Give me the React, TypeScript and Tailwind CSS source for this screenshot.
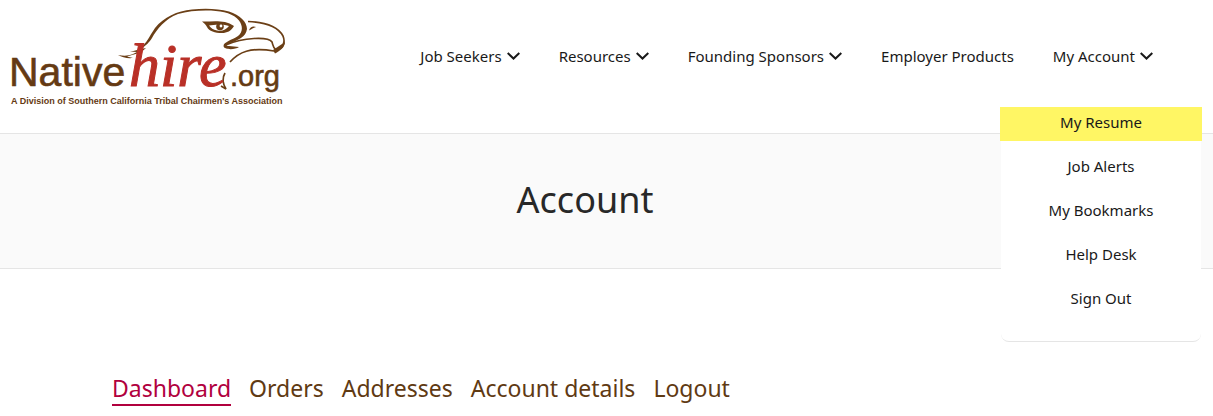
import React from 'react';

const navItems = [
    { label: 'Job Seekers', hasMenu: true },
    { label: 'Resources', hasMenu: true },
    { label: 'Founding Sponsors', hasMenu: true },
    { label: 'Employer Products', hasMenu: false },
];

const accountMenu = ['Job Alerts', 'My Bookmarks', 'Help Desk', 'Sign Out'];

const tabs = ['Orders', 'Addresses', 'Account details', 'Logout'];

const Chevron: React.FC = () => (
    <svg className="w-[13px] h-2" viewBox="0 0 13 8" fill="none" stroke="currentColor" strokeWidth="2" aria-hidden="true">
        <path d="M0.7 1 L6.5 6.5 L12.3 1" />
    </svg>
);

const Logo: React.FC = () => (
    <svg className="block w-[280px] h-[100px]" viewBox="8 8 280 100" role="img" aria-label="NativeHire.org">
        {/* Eagle head */}
        <g fill="#6b3f16">
            <path d="M118 55 C124 56 128 56 133 54 L137 52 L130 51.5 C135 51 138 50 141 48 C147 42 149 37 155 28 C164 17 177 11 192 9.5 C205 8.2 218 8.6 229 11.5 C240 15 247 22 247 29 C246 37 238 40 229 43.5 C226 45 226 46 229 46 L239 47 C235 50 224 50 223.5 46 C223.5 42 232 40 238 36 C243 32 243 26 239 20.5 C234 14 224 11.5 211 10.6 C200 10.2 188 11 178 14 C165 19 157 29 152 38 C149 43 146 45 141.5 49 L146 48 C142 52 137 54 132 55 L127 56.5 L133 58 C127 58.5 122 57.5 118 55 Z" />
            <path d="M202 21.5 C211 22 224 19 234 26 C231 31 227 33 222 33 C215 33 209 31 207 27 C206 25 204 23 202 21.5 Z" />
            <path d="M249 30.5 C250 27 253 25.5 256 27 C253 28 252 29 249 30.5 Z" />
            <path d="M273 50 L285 42 C285 47 280 51 275 53.5 Z" />
        </g>
        <path d="M209 25.5 C214 25 219 23 229 26 C226 30 222 31.5 217 30.5 C213 30 211 28 209 25.5 Z" fill="#fff" />
        <circle cx="220" cy="26.5" r="3.8" fill="#6b3f16" />
        <circle cx="221" cy="26" r="1.4" fill="#fff" />
        <g fill="none" stroke="#6b3f16" strokeWidth="1.7">
            <path d="M248 21.5 C262 22 277 25 283 36 C285 41 284 45 281 48" />
            <path d="M227 44.5 C235 41 246 39 254 38.5 C263 38 270 39 272 42 C273 45 273 48 276 50" />
            <path d="M230 62 C239 52 250 47 274 51" />
            <path d="M225 73 C222 78 223 84 226 89 L221 86" />
        </g>
        <g fill="#653a13" fontFamily="'Liberation Sans', Arial, sans-serif">
            <text x="9" y="86" fontSize="41" stroke="#653a13" strokeWidth="0.6">Native</text>
            <text x="230" y="86" fontSize="29" stroke="#653a13" strokeWidth="0.6">.org</text>
            <text x="11" y="104" fontSize="9" fontWeight="bold">
                A Division of Southern California Tribal Chairmen's Association
            </text>
        </g>
        <text x="129" y="86" fontSize="62" fill="#b93027" stroke="#b93027" strokeWidth="1" fontStyle="italic" fontFamily="'Liberation Serif', serif">hire</text>
    </svg>
);

const App: React.FC = () => {
    return (
        <div className="bg-white font-['Noto_Sans',sans-serif] text-[#191919]">
            <header className="flex items-center justify-between h-[134px] border-b border-[#e5e5e5] pl-2 pr-[60px]">
                <a href="#" className="self-start pt-2">
                    <Logo />
                </a>
                <nav className="self-start pt-11">
                    <ul className="flex gap-[39px] text-[15px] leading-6">
                        {navItems.map(item => (
                            <li key={item.label}>
                                <a href="#" className="flex items-center gap-[5px] whitespace-nowrap">
                                    {item.label}
                                    {item.hasMenu && <Chevron />}
                                </a>
                            </li>
                        ))}
                        <li className="relative">
                            <a href="#" className="flex items-center gap-[5px] whitespace-nowrap">
                                My Account
                                <Chevron />
                            </a>
                            <ul className="absolute top-[63px] -right-12 w-[200px] pb-5 bg-white rounded-b-lg border-b border-[#e5e5e5] text-center">
                                <li className="-mx-px mb-1 bg-[#fff664]">
                                    <a href="#" className="block h-[34px] leading-[30px]">My Resume</a>
                                </li>
                                {accountMenu.map(label => (
                                    <li key={label} className="h-11">
                                        <a href="#" className="block leading-[42px]">{label}</a>
                                    </li>
                                ))}
                            </ul>
                        </li>
                    </ul>
                </nav>
            </header>

            <section className="bg-[#fafafa] border-b border-[#e5e5e5]">
                <div className="max-w-[1170px] pt-10 pb-[42px] text-center">
                    <h1 className="text-[36px] leading-[52px] text-[#282828]">Account</h1>
                </div>
            </section>

            <main className="px-28 pt-[103px]">
                <nav>
                    <ul className="flex gap-[18px] text-[23px] leading-8 text-[#5f3a13]">
                        <li>
                            <a href="#" className="block border-b-2 border-[#b1003e] text-[#b1003e]">Dashboard</a>
                        </li>
                        {tabs.map(tab => (
                            <li key={tab}>
                                <a href="#" className="block whitespace-nowrap">{tab}</a>
                            </li>
                        ))}
                    </ul>
                </nav>
            </main>
        </div>
    );
};

export default App;
